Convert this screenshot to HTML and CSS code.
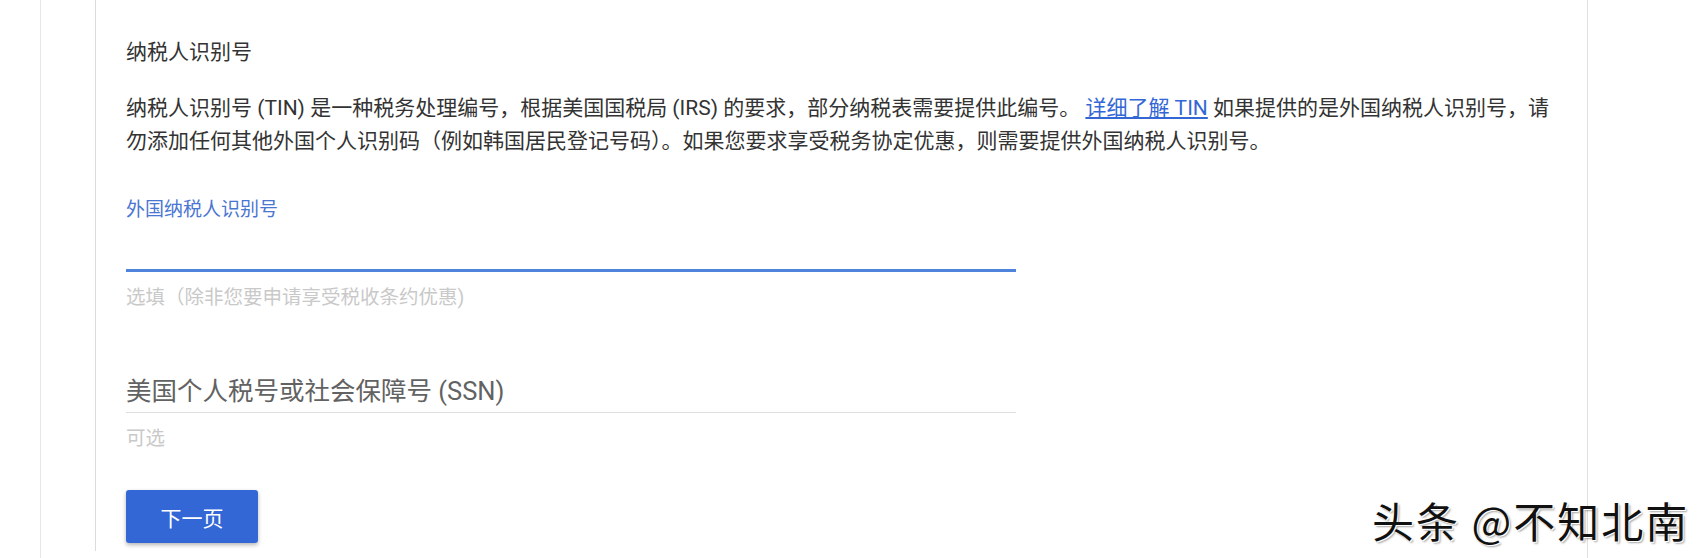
FILE: index.html
```html
<!DOCTYPE html>
<html lang="zh-CN">
<head>
    <meta charset="UTF-8">
    <title>纳税人识别号</title>
    <link rel="stylesheet" href="styles.css">
</head>
<body>
    <div class="page">
        <div class="panel">
            <h2 class="section-title">纳税人识别号</h2>
            <p class="desc">纳税人识别号 (TIN) 是一种税务处理编号，根据美国国税局 (IRS) 的要求，部分纳税表需要提供此编号。 <a href="#">详细了解 TIN</a> 如果提供的是外国纳税人识别号，请勿添加任何其他外国个人识别码（例如韩国居民登记号码）。如果您要求享受税务协定优惠，则需要提供外国纳税人识别号。</p>

            <div class="field">
                <label class="field-label" for="foreign-tin">外国纳税人识别号</label>
                <input type="text" id="foreign-tin" class="field-input focused">
                <div class="hint">选填（除非您要申请享受税收条约优惠)</div>
            </div>

            <div class="field field-ssn">
                <input type="text" class="field-input big" placeholder="美国个人税号或社会保障号 (SSN)">
                <div class="hint">可选</div>
            </div>

            <button class="next-btn">下一页</button>
        </div>
    </div>

    <!-- 水印 -->
    <div class="watermark">头条 @不知北南</div>
</body>
</html>
```

FILE: styles.css
```css
html, body {
    margin: 0;
    height: 100%;
}
body {
    font-family: Roboto, "Noto Sans CJK SC", sans-serif;
    color: #333;
    background: #fff;
    overflow: hidden;
}
.page {
    margin-left: 40px;
    width: 1548px;
    height: 100%;
    box-sizing: border-box;
    border-left: 1px solid #e6e6e6;
    border-right: 1px solid #e0e0e0;
}
.panel {
    margin-left: 54px;
    border-left: 1px solid #dcdcdc;
    padding: 38px 30px 8px 30px;
}
.section-title {
    margin: 0;
    font-size: 21px;
    font-weight: normal;
    line-height: 28px;
}
.desc {
    margin: 26px 0 0 0;
    font-size: 21px;
    line-height: 33px;
}
.desc a {
    color: #3367d6;
    text-decoration: underline;
}
.field {
    width: 890px;
    margin-top: 40px;
}
.field-ssn {
    margin-top: 53px;
}
.field-label {
    display: block;
    font-size: 19px;
    line-height: 24px;
    color: #4a76d2;
}
.field-input {
    display: block;
    width: 100%;
    height: 50px;
    box-sizing: border-box;
    border: none;
    border-bottom: 1px solid #dedede;
    padding: 6px 0 0 0;
    font-family: inherit;
    font-size: 25.5px;
    color: #333;
    outline: none;
    background: transparent;
}
.field-input.focused {
    border-bottom: 3px solid #4f84dc;
}
.field-input::placeholder {
    color: #626262;
}
.hint {
    margin-top: 14px;
    font-size: 19.5px;
    line-height: 24px;
    color: #c9c9c9;
}
.next-btn {
    display: block;
    margin-top: 39px;
    width: 132px;
    height: 53px;
    background-color: #3367d6;
    color: white;
    border: none;
    border-radius: 3px;
    font-family: inherit;
    font-size: 21px;
    box-shadow: 0 2px 4px rgba(0,0,0,0.3);
    cursor: pointer;
}
.watermark {
    position: absolute;
    left: 1372px;
    top: 496px;
    font-family: "Noto Sans CJK SC", sans-serif;
    font-size: 42px;
    line-height: 48px;
    letter-spacing: 2px;
    color: #111;
    white-space: nowrap;
    text-shadow: 1px 1px 0 #fff, 2px 2px 2px rgba(0,0,0,0.35);
}
```
